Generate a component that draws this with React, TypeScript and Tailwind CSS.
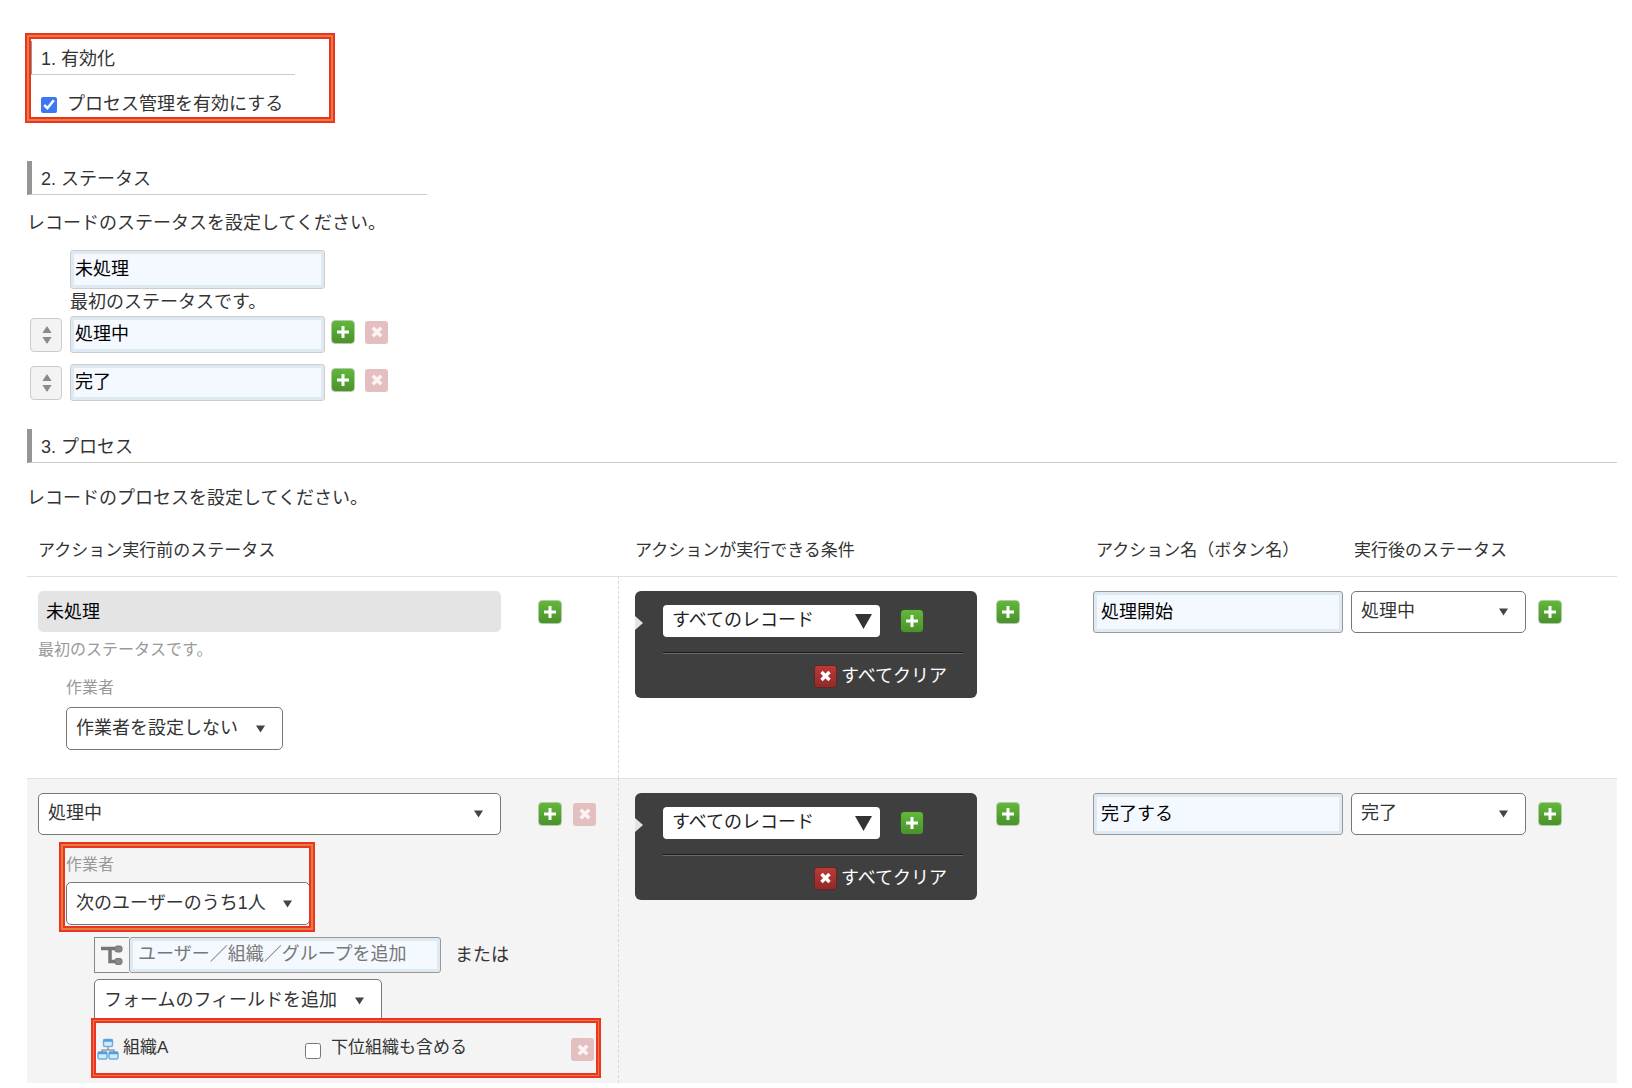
import { useState } from 'react';
import type { ReactNode } from 'react';
import clsx from 'clsx';

const FONT = "font-['Liberation_Sans','Noto_Sans_CJK_JP',sans-serif]";

function AddButton({ dark = false }: { dark?: boolean }) {
  return (
    <button
      type="button"
      aria-label="追加"
      className={clsx(
        'flex size-6 shrink-0 items-center justify-center rounded-[4px] border bg-gradient-to-b from-[#62b83a] to-[#4a922c]',
        dark ? 'border-[#3a4a34]' : 'border-[#b4c8aa]',
      )}
    >
      <svg viewBox="0 0 22 22" className="size-[22px]" fill="none" stroke="#fff" strokeWidth="3">
        <path d="M11 5v12M5 11h12" />
      </svg>
    </button>
  );
}

function RemoveButton({ active = false }: { active?: boolean }) {
  return (
    <button
      type="button"
      aria-label="削除"
      className={clsx(
        'flex size-[23px] shrink-0 items-center justify-center rounded-[3px]',
        active ? 'border border-[#5a2a28] bg-gradient-to-b from-[#bb3a36] to-[#93292a]' : 'bg-[#e4bfbf]',
      )}
    >
      <svg
        viewBox="0 0 22 22"
        className="size-[22px]"
        fill="none"
        stroke={active ? '#fff' : '#fbf3f3'}
        strokeWidth="3.6"
      >
        <path d="M6.8 6.8l8.4 8.4M15.2 6.8l-8.4 8.4" />
      </svg>
    </button>
  );
}

function SortHandle() {
  return (
    <button
      type="button"
      aria-label="並べ替え"
      className="flex h-[34px] w-8 items-center justify-center rounded-[4px] border border-[#ccc] bg-[#f3f3f3]"
    >
      <svg viewBox="0 0 12 20" className="ml-[2px] h-5 w-3" fill="#8a8a8a">
        <path d="M6 1l4.6 7H1.4zM6 19l4.6-7H1.4z" />
      </svg>
    </button>
  );
}

function TextField({
  label,
  defaultValue,
  placeholder,
  className,
}: {
  label: string;
  defaultValue?: string;
  placeholder?: string;
  className?: string;
}) {
  return (
    <input
      type="text"
      aria-label={label}
      defaultValue={defaultValue}
      placeholder={placeholder}
      className={clsx(
        'rounded-[3px] border bg-[#f4f9ff] text-lg text-black shadow-[inset_0_0_0_3px_#dfe9f2] placeholder:text-[#777] focus:outline-none',
        className,
      )}
    />
  );
}

function Dropdown({ label, options, className }: { label: string; options: string[]; className?: string }) {
  return (
    <div className={clsx('relative', className)}>
      <select
        aria-label={label}
        className="h-full w-full appearance-none rounded-[5px] border border-[#777] bg-white pb-[2px] pl-[9px] text-lg text-[#333]"
      >
        {options.map((option) => (
          <option key={option}>{option}</option>
        ))}
      </select>
      <svg
        viewBox="0 0 10 8"
        className="pointer-events-none absolute top-1/2 right-[18px] h-2 w-[9px] -translate-y-1/2"
        fill="#444"
      >
        <path d="M0 0h10L5 8z" />
      </svg>
    </div>
  );
}

// Double red frame laid over the parts the guide points out
function Highlight({ className, thin = false }: { className: string; thin?: boolean }) {
  return (
    <div
      className={clsx(
        'pointer-events-none absolute border-2 border-[#ee3322]',
        thin
          ? 'shadow-[inset_0_0_0_1px_#e08040,inset_0_0_0_3px_#ee3322]'
          : 'shadow-[inset_0_0_0_2px_#e08040,inset_0_0_0_4px_#ee3322]',
        className,
      )}
    />
  );
}

function SectionTitle({ children, className }: { children: ReactNode; className?: string }) {
  return (
    <h2
      className={clsx(
        'h-[34px] border-b border-l-[5px] border-b-[#cfccc7] border-l-[#959595] pl-[9px] text-lg leading-9',
        className,
      )}
    >
      {children}
    </h2>
  );
}

function ConditionPanel() {
  return (
    <div className="relative w-[342px] rounded-[6px] bg-[#3f3f3f] pt-[14px] pr-[14px] pb-[9px] pl-7">
      <svg viewBox="0 0 8 14" className="absolute top-[25px] left-0 h-[14px] w-2" fill="#e4e4e4">
        <path d="M0 0l8 7-8 7z" />
      </svg>
      <div className="flex items-center gap-5">
        <div className="relative h-8 w-[217px]">
          <select
            aria-label="条件"
            className="h-full w-full appearance-none rounded-[4px] bg-white pb-[2px] pl-[9px] text-lg text-[#222]"
          >
            <option>すべてのレコード</option>
          </select>
          <svg
            viewBox="0 0 17 15"
            className="pointer-events-none absolute top-[9px] right-2 h-[15px] w-[17px]"
            fill="#333"
          >
            <path d="M0 0h17L8.500 15z" />
          </svg>
        </div>
        <AddButton dark />
      </div>
      <hr className="mt-[15px] h-[2px] border-t border-b border-t-[#1c1c1c] border-b-[#6a6a6a]" />
      <div className="mt-[9px] flex items-center justify-end gap-1 pr-4">
        <RemoveButton active />
        <span className="text-lg leading-[26px] text-white">すべてクリア</span>
      </div>
    </div>
  );
}

const statuses = ['処理中', '完了'];

const actions = [
  { name: '処理開始', next: '処理中' },
  { name: '完了する', next: '完了' },
];

function ActionCells({ action }: { action: (typeof actions)[number] }) {
  return (
    <>
      <td className="border-t border-[#e0e0e0] pt-[14px] pl-4 align-top">
        <div className="flex items-start gap-[19px]">
          <ConditionPanel />
          <div className="pt-[9px]">
            <AddButton />
          </div>
        </div>
      </td>
      <td className="border-t border-[#e0e0e0] pt-[14px] pl-[11px] align-top">
        <TextField
          label="アクション名"
          defaultValue={action.name}
          className="h-[42px] w-[250px] border-[#999] pb-[5px] pl-[7px]"
        />
      </td>
      <td className="border-t border-[#e0e0e0] pt-[14px] align-top">
        <div className="flex items-center gap-3">
          <Dropdown label="実行後のステータス" options={[action.next]} className="h-[42px] w-[175px]" />
          <AddButton />
        </div>
      </td>
    </>
  );
}

function TreeIcon() {
  return (
    <svg viewBox="0 0 22 22" className="size-[22px]" fill="none" stroke="#777" strokeWidth="3.5">
      <path d="M0 4.500h14M9 4v13.500h6" />
      <rect x="14" y="2" width="7" height="6" rx="2" fill="#888" strokeWidth="1" />
      <rect x="14" y="14.500" width="7" height="6" rx="2" fill="#888" strokeWidth="1" />
    </svg>
  );
}

function OrganizationIcon() {
  return (
    <svg viewBox="0 0 22 22" className="size-[22px]" fill="#d3eafb" stroke="#6ab0e6" strokeWidth="1.500">
      <path d="M11 9v3M5 14v-2h12v2" fill="none" stroke="#999" />
      <rect x="6.500" y="1.500" width="9" height="7" rx="1.500" />
      <path d="M6.500 2.500h9" stroke="#4f9fde" strokeWidth="2.500" />
      <rect x="1" y="14" width="9" height="7" rx="1.500" />
      <path d="M1 15h9" stroke="#4f9fde" strokeWidth="2.500" />
      <rect x="12" y="14" width="9" height="7" rx="1.500" />
      <path d="M12 15h9" stroke="#4f9fde" strokeWidth="2.500" />
    </svg>
  );
}

export default function App() {
  const [enabled, setEnabled] = useState(true);
  const [includeChildren, setIncludeChildren] = useState(false);

  return (
    <main className={clsx('bg-white pt-[41px] pr-[15px] pb-1 pl-[27px] text-[#333]', FONT)}>
      {/* 1. Enable */}
      <section className="relative pb-[5px]">
        <SectionTitle className="w-[268px]">1. 有効化</SectionTitle>
        <label className="mt-[15px] flex items-center gap-[10px] pl-[14px] text-lg leading-7">
          <input
            type="checkbox"
            checked={enabled}
            onChange={(e) => setEnabled(e.target.checked)}
            className="mt-[2px] size-4 accent-[#3b78f5]"
          />
          プロセス管理を有効にする
        </label>
        <Highlight className="-top-2 bottom-0 -left-[2px] w-[310px]" />
      </section>

      {/* 2. Statuses */}
      <section className="mt-[38px]">
        <SectionTitle className="w-[400px]">2. ステータス</SectionTitle>
        <p className="mt-[14px] text-lg leading-7">レコードのステータスを設定してください。</p>
        <div className="mt-[13px] pl-[43px]">
          <TextField
            label="最初のステータス"
            defaultValue="未処理"
            className="block h-[39px] w-[255px] border-[#ccc] pb-[5px] pl-1"
          />
          <p className="text-lg leading-[27px]">最初のステータスです。</p>
        </div>
        <ul className="space-y-[11px] pl-[3px]">
          {statuses.map((status) => (
            <li key={status} className="flex items-center">
              <SortHandle />
              <TextField
                label="ステータス"
                defaultValue={status}
                className="ml-2 h-[37px] w-[255px] border-[#ccc] pb-[5px] pl-1"
              />
              <div className="ml-[6px] flex items-center gap-[10px] pb-[5px]">
                <AddButton />
                <RemoveButton />
              </div>
            </li>
          ))}
        </ul>
      </section>

      {/* 3. Process */}
      <section className="mt-7">
        <SectionTitle>3. プロセス</SectionTitle>
        <p className="mt-[21px] text-lg leading-7">レコードのプロセスを設定してください。</p>
        <table className="mt-[14px] w-full table-fixed border-separate border-spacing-0">
          <colgroup>
            <col className="w-[592px]" />
            <col className="w-[463px]" />
            <col className="w-[269px]" />
            <col />
          </colgroup>
          <thead>
            <tr className="h-[50px] text-left text-[17px]">
              <th className="pl-[11px] font-normal">アクション実行前のステータス</th>
              <th className="pl-4 font-normal">アクションが実行できる条件</th>
              <th className="pl-[14px] font-normal">アクション名（ボタン名）</th>
              <th className="pl-[3px] font-normal">実行後のステータス</th>
            </tr>
          </thead>
          <tbody>
            <tr>
              <td className="border-t border-r border-t-[#e0e0e0] border-r-[#d8d8d8] pt-[14px] pb-7 pl-[11px] align-top [border-right-style:dashed]">
                <div className="flex items-center gap-[37px]">
                  <input
                    type="text"
                    readOnly
                    aria-label="アクション実行前のステータス"
                    value="未処理"
                    className="h-[41px] w-[463px] rounded-[5px] bg-[#e4e4e4] pb-1 pl-2 text-lg text-black focus:outline-none"
                  />
                  <AddButton />
                </div>
                <p className="mt-[6px] text-base leading-6 text-[#999]">最初のステータスです。</p>
                <div className="mt-[14px] pl-7">
                  <p className="text-base leading-6 text-[#999]">作業者</p>
                  <Dropdown label="作業者" options={['作業者を設定しない']} className="mt-[7px] h-[43px] w-[217px]" />
                </div>
              </td>
              <ActionCells action={actions[0]} />
            </tr>
            <tr className="bg-[#f4f4f4]">
              <td className="border-t border-r border-t-[#e0e0e0] border-r-[#d8d8d8] pt-[14px] pb-[10px] pl-[11px] align-top [border-right-style:dashed]">
                <div className="flex items-center">
                  <Dropdown
                    label="アクション実行前のステータス"
                    options={['処理中']}
                    className="h-[42px] w-[463px]"
                  />
                  <div className="ml-[37px] flex items-center gap-[11px]">
                    <AddButton />
                    <RemoveButton />
                  </div>
                </div>
                <div className="mt-[18px] pl-7">
                  <div className="relative w-[244px]">
                    <p className="text-base leading-6 text-[#999]">作業者</p>
                    <Dropdown label="作業者" options={['次のユーザーのうち1人']} className="mt-[5px] h-[43px]" />
                    <Highlight className="-top-[11px] -right-[5px] -bottom-[7px] -left-[7px]" />
                  </div>
                  <div className="mt-3 flex items-center pl-7">
                    <button
                      type="button"
                      aria-label="組織から選択"
                      className="flex h-9 w-[35px] items-center justify-center border border-r-0 border-[#888] bg-[#f6f6f6]"
                    >
                      <TreeIcon />
                    </button>
                    <TextField
                      label="ユーザー／組織／グループを追加"
                      placeholder="ユーザー／組織／グループを追加"
                      className="h-9 w-[312px] border-[#999] pb-[2px] pl-2"
                    />
                    <span className="ml-[14px] text-lg">または</span>
                  </div>
                  <div className="mt-[6px] pl-7">
                    <Dropdown
                      label="フォームのフィールドを追加"
                      options={['フォームのフィールドを追加']}
                      className="h-[43px] w-[288px]"
                    />
                  </div>
                  <div className="relative ml-7 flex h-[51px] w-[507px] items-center bg-[#f4f4f4] pt-[2px] pl-[3px] text-[17px]">
                    <OrganizationIcon />
                    <span className="ml-1 w-[182px] pb-[2px]">組織A</span>
                    <label className="flex flex-1 items-center gap-[10px]">
                      <input
                        type="checkbox"
                        checked={includeChildren}
                        onChange={(e) => setIncludeChildren(e.target.checked)}
                        className="mt-1 size-4"
                      />
                      <span className="pb-[2px]">下位組織も含める</span>
                    </label>
                    <div className="pt-[2px] pr-[7px]">
                      <RemoveButton />
                    </div>
                    <Highlight thin className="-top-1 right-0 -bottom-[5px] -left-[3px]" />
                  </div>
                </div>
              </td>
              <ActionCells action={actions[1]} />
            </tr>
          </tbody>
        </table>
      </section>
    </main>
  );
}
